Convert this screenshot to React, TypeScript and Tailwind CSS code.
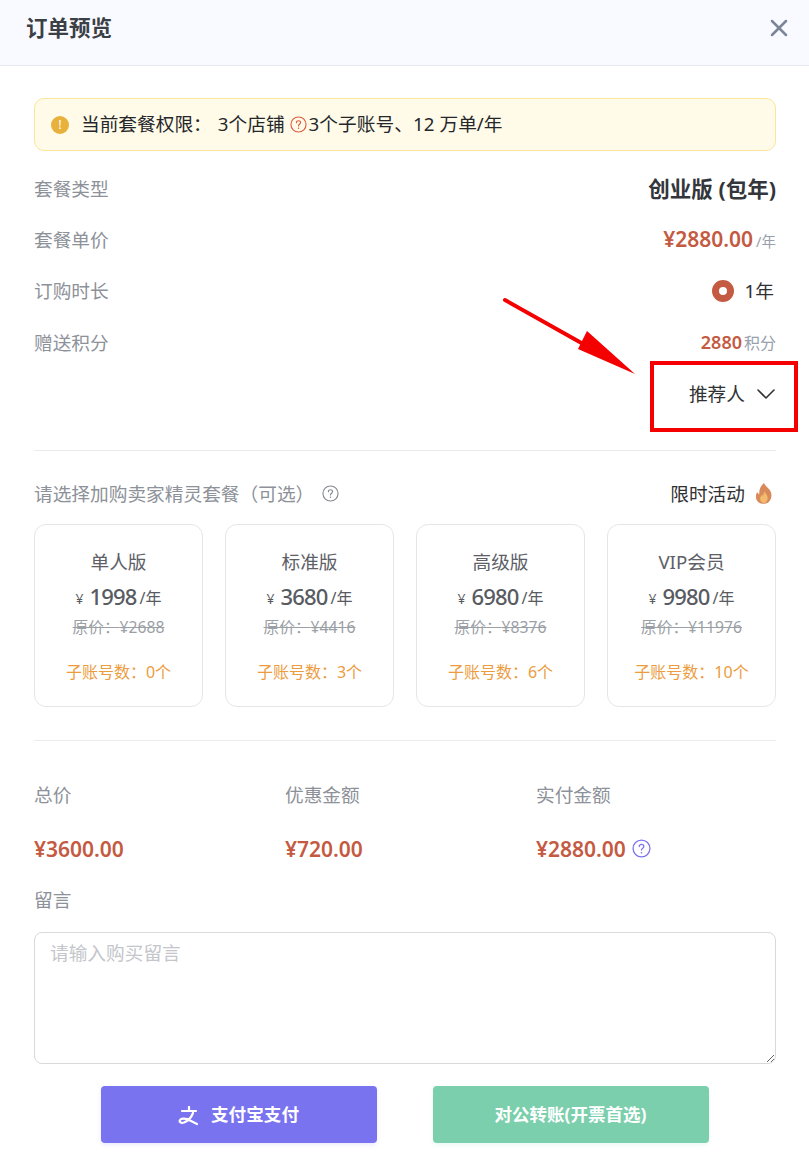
import React from 'react';
import { X, ChevronDown } from 'lucide-react';

const plans = [
  { name: '单人版', price: '1998', origin: '¥2688', subs: '0个' },
  { name: '标准版', price: '3680', origin: '¥4416', subs: '3个' },
  { name: '高级版', price: '6980', origin: '¥8376', subs: '6个' },
  { name: 'VIP会员', price: '9980', origin: '¥11976', subs: '10个' },
];

const Help = ({ className = '' }: { className?: string }) => (
  <svg viewBox="0 0 18 18" className={className} fill="none" stroke="currentColor">
    <circle cx="9" cy="9" r="8" strokeWidth="1.2" />
    <path d="M6.8 7.1c0-1.3 1-2.1 2.2-2.1s2.2.8 2.2 2c0 1.700-2.200 1.800-2.200 3.500" strokeWidth="1.200" strokeLinecap="round" />
    <circle cx="9" cy="13" r="0.8" fill="currentColor" stroke="none" />
  </svg>
);

const Row = ({ label, children }: { label: string; children: React.ReactNode }) => (
  <div className="flex h-[51.4px] items-center justify-between">
    <span className="text-[18.7px] text-[#8d9199]">{label}</span>
    <div className="flex items-center">{children}</div>
  </div>
);

export default function App() {
  return (
    <div className="relative h-[1153px] w-[809px] overflow-hidden bg-white font-['Noto_Sans','Noto_Sans_CJK_SC',sans-serif] text-[#303133]">
      {/* Header */}
      <div className="flex h-[66px] items-center justify-between border-b border-[#e8e9ef] bg-[#f9faff] pb-[9px] pl-[26px] pr-[16px]">
        <h1 className="text-[21.5px] font-bold text-[#3b3f46]">订单预览</h1>
        <X className="h-[28px] w-[28px] text-[#7c8698]" strokeWidth={2.2} />
      </div>

      <div className="pl-[34px] pr-[33px] pt-[32px]">
        {/* Notice */}
        <div className="flex h-[53px] items-center rounded-[10px] border border-[#fbe59a] bg-[#fffbe8] pl-[16px] text-[18.7px] text-[#25272b]">
          <span className="mr-[12px] flex h-[18px] w-[18px] items-center justify-center rounded-full bg-[#e8b13c] text-[13px] leading-none text-white">!</span>
          <span>当前套餐权限：</span>
          <span className="ml-[6px]">3个店铺</span>
          <Help className="ml-[5px] h-[17px] w-[17px] text-[#dd5b3f]" />
          <span className="ml-[2px] tracking-[0.05px]">3个子账号、12 万单/年</span>
        </div>

        {/* Plan details */}
        <div className="mt-[12px]">
          <Row label="套餐类型">
            <span className="text-[21.5px] font-bold text-[#33363b]">创业版 (包年)</span>
          </Row>
          <Row label="套餐单价">
            <span className="text-[21px] font-semibold text-[#c45a41]">¥2880.00</span>
            <span className="ml-[3px] mt-[3px] text-[14.5px] text-[#98a0ad]">/年</span>
          </Row>
          <Row label="订购时长">
            <span className="mr-[11px] h-[22px] w-[22px] rounded-full border-[7px] border-[#c45a41] bg-white" />
            <span className="mr-[2px] text-[18.7px] text-[#303133]">1年</span>
          </Row>
          <Row label="赠送积分">
            <span className="text-[18px] font-semibold text-[#c45a41]">2880</span>
            <span className="ml-[2px] text-[16px] text-[#98a0ad]">积分</span>
          </Row>
          <div className="flex h-[51.400px] items-center justify-end">
            <span className="text-[18.7px] text-[#303133]">推荐人</span>
            <ChevronDown className="ml-[5px] mr-[-6px] h-[32px] w-[32px] text-[#303133]" strokeWidth={1.2} />
          </div>
        </div>

        <div className="mt-[30px] border-t border-[#ececef]" />

        {/* Add-on plans */}
        <div className="mt-[30px] flex h-[26px] items-center justify-between">
          <div className="flex items-center">
            <span className="text-[18.7px] text-[#8d9199]">请选择加购卖家精灵套餐（可选）</span>
            <Help className="ml-[8px] h-[17px] w-[17px] text-[#85888e]" />
          </div>
          <div className="mr-[3px] flex items-center">
            <span className="text-[18.7px] text-[#303133]">限时活动</span>
            <svg viewBox="0 0 16 20" className="ml-[10px] h-[21px] w-[18px]">
              <path d="M8 0c1 3 4.500 4.500 6.300 8 1.700 3.500.7 8.500-2.300 10.500-2.500 1.800-6.500 1.800-9 0C.2 16.500-.7 12 1.500 8.500c.5 1 1 1.700 2 2.200C3 6.500 5 2.500 8 0z" fill="#d98a5b" />
              <path d="M8.300 8c.7 1.800 3.700 3.800 3.200 7-.4 2.500-2 4-3.700 4S4.300 17.500 4.300 15c0-2 1.200-2.500 1.700-4 .5.500.8 1 1 1.500.5-1.200.8-3 1.300-4.500z" fill="#f3bb6d" />
            </svg>
          </div>
        </div>

        <div className="mt-[17px] grid grid-cols-4 gap-[22px]">
          {plans.map((plan) => (
            <div key={plan.name} className="flex h-[183px] flex-col items-center rounded-[12px] border border-[#e6e6e8] pt-[22px]">
              <div className="h-[30px] text-[18.7px] leading-[30px] text-[#5d6067]">{plan.name}</div>
              <div className="mt-[3px] mb-[1px] flex h-[34px] items-center text-[#585b62]">
                <span className="mr-[6px] mt-[4px] text-[14px]">¥</span>
                <span className="text-[22px] font-medium tracking-[-0.8px]">{plan.price}</span>
                <span className="ml-[3px] mt-[3px] text-[16px]">/年</span>
              </div>
              <div className="h-[24px] text-[15.7px] leading-[24px] text-[#9b9fa6] line-through">原价：{plan.origin}</div>
              <div className="mt-[21px] h-[24px] text-[16px] leading-[24px] text-[#ec9c3e]">子账号数：{plan.subs}</div>
            </div>
          ))}
        </div>

        <div className="mt-[33px] border-t border-[#ececef]" />

        {/* Totals */}
        <div className="mt-[40px] grid grid-cols-[251px_251px_1fr]">
          <span className="text-[18.7px] leading-[28px] text-[#8d9199]">总价</span>
          <span className="text-[18.7px] leading-[28px] text-[#8d9199]">优惠金额</span>
          <span className="text-[18.7px] leading-[28px] text-[#8d9199]">实付金额</span>
          <span className="mt-[26px] text-[21px] font-semibold leading-[28px] text-[#c45a41]">¥3600.00</span>
          <span className="mt-[26px] text-[21px] font-semibold leading-[28px] text-[#c45a41]">¥720.00</span>
          <div className="mt-[26px] flex items-center">
            <span className="text-[21px] font-semibold leading-[28px] text-[#c45a41]">¥2880.00</span>
            <Help className="ml-[6px] h-[19px] w-[19px] text-[#7b72f0]" />
          </div>
        </div>

        <div className="mt-[23px] text-[18.7px] leading-[28px] text-[#8d9199]">留言</div>

        <textarea
          placeholder="请输入购买留言"
          className="mt-[18px] block h-[132px] w-full rounded-[8px] border border-[#d9d9d9] px-[15px] py-[6px] text-[18.7px] outline-none placeholder:text-[#c4c6cb]"
        />

        {/* Actions */}
        <div className="mt-[22px] ml-[-1px] flex justify-center gap-[56px]">
          <button className="flex h-[57px] w-[276px] items-center justify-center rounded-[4px] bg-[#7a73ef] text-[17.6px] font-bold text-white shadow-[0_2px_4px_rgba(122,115,239,0.15)]">
            <svg viewBox="0 0 22 20" className="mr-[11px] mt-[3px] h-[20px] w-[22px]" fill="none" stroke="white" strokeWidth="2.2" strokeLinecap="round" strokeLinejoin="round">
              <path d="M4 5h14M11 1v4M15 7c-1.500 4-5 8-9 9.500-3 1-5-.5-4-2.500 1.200-2.200 6-1.800 10 .5l7 3.500" />
            </svg>
            支付宝支付
          </button>
          <button className="flex h-[57px] w-[276px] items-center justify-center rounded-[4px] bg-[#7bcfac] text-[17.5px] font-bold text-white shadow-[0_2px_4px_rgba(123,207,172,0.15)]">
            对公转账(开票首选)
          </button>
        </div>
      </div>

      {/* Red annotation drawn on top of the screenshot */}
      <div className="absolute left-[650px] top-[361px] h-[71px] w-[148px] border-[4px] border-[#f50000]" />
      <svg className="absolute left-[500px] top-[295px] h-[80px] w-[140px]" viewBox="0 0 140 80" fill="none">
        <path d="M5 5L85 50" stroke="#f50000" strokeWidth="4" strokeLinecap="round" />
        <path d="M87 36L78 54L135 79Z" fill="#f50000" />
      </svg>
    </div>
  );
}
